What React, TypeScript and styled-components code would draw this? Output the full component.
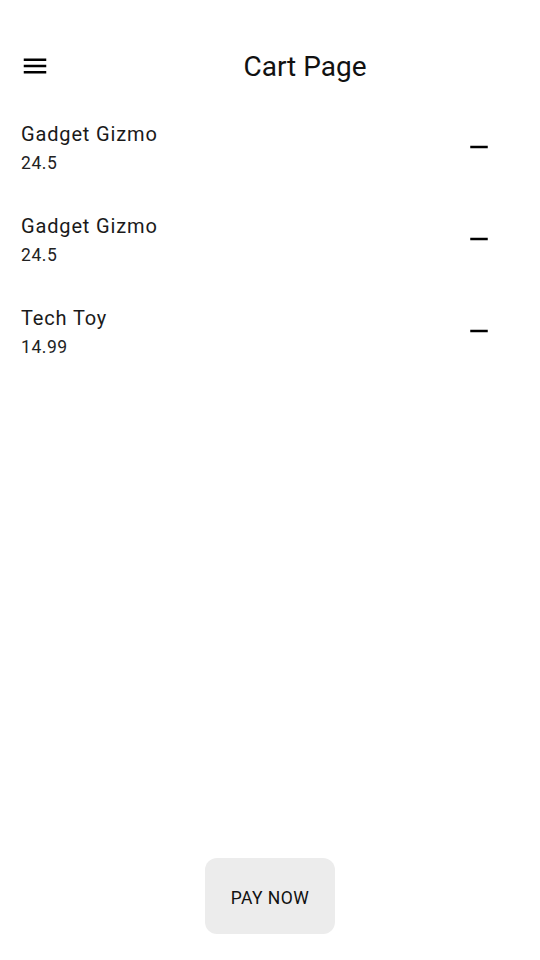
import React from "react";
import styled, { createGlobalStyle } from "styled-components";

const Global = createGlobalStyle`
  html, body { margin: 0; padding: 0; background: #fff; }
  body { font-family: Roboto, "Noto Sans", sans-serif; color: #1a1a1a; }
`;

const Page = styled.div`
  display: flex;
  flex-direction: column;
  min-height: 100vh;
  box-sizing: border-box;
  padding-top: 31px;
`;

const AppBar = styled.header`
  display: flex;
  align-items: center;
  height: 70px;
`;

const Leading = styled.div`
  width: 70px;
  display: flex;
  align-items: center;
  padding-left: 19.5px;
  box-sizing: border-box;
`;

const Title = styled.h1`
  flex: 1;
  margin: 0;
  text-align: center;
  font-size: 28px;
  font-weight: 400;
  color: #111;
`;

const List = styled.ul`
  flex: 1;
  list-style: none;
  margin: 0;
  padding: 0;
`;

const Row = styled.li`
  display: flex;
  align-items: center;
  height: 92px;
  padding: 0 46px 0 21px;
`;

const Info = styled.div`
  flex: 1;
  display: flex;
  flex-direction: column;
  margin-top: 3px;
`;

const Name = styled.span`
  font-size: 20px;
  line-height: 30px;
  letter-spacing: 0.85px;
  color: #1a1a1a;
`;

const Price = styled.span`
  font-size: 17.5px;
  line-height: 29px;
  letter-spacing: 0.55px;
  color: #222;
`;

const IconButton = styled.button`
  border: none;
  background: none;
  padding: 0;
  display: flex;
  cursor: pointer;
`;

const Footer = styled.div`
  display: flex;
  justify-content: center;
  padding-bottom: 26px;
`;

const PayButton = styled.button`
  width: 130px;
  height: 76px;
  padding: 3px 0 0;
  border: none;
  border-radius: 12px;
  background: #ececec;
  font-family: Roboto, sans-serif;
  font-size: 17.5px;
  letter-spacing: 0.45px;
  color: #111;
`;

const MenuIcon = () => (
  <svg width="30" height="30" viewBox="0 0 24 24" fill="#000">
    <path d="M3 18h18v-2H3v2zm0-5h18v-2H3v2zm0-7v2h18V6H3z" />
  </svg>
);

const RemoveIcon = () => (
  <svg width="30" height="30" viewBox="0 0 24 24" fill="#000">
    <path d="M19 13H5v-2h14v2z" />
  </svg>
);

const items = [
  { name: "Gadget Gizmo", price: "24.5" },
  { name: "Gadget Gizmo", price: "24.5" },
  { name: "Tech Toy", price: "14.99" },
];

export default function App() {
  return (
    <>
      <Global />
      <Page>
        <AppBar>
          <Leading>
            <MenuIcon />
          </Leading>
          <Title>Cart Page</Title>
        </AppBar>
        <List>
          {items.map((it, i) => (
            <Row key={i}>
              <Info>
                <Name>{it.name}</Name>
                <Price>{it.price}</Price>
              </Info>
              <IconButton aria-label="remove">
                <RemoveIcon />
              </IconButton>
            </Row>
          ))}
        </List>
        <Footer>
          <PayButton>PAY NOW</PayButton>
        </Footer>
      </Page>
    </>
  );
}
